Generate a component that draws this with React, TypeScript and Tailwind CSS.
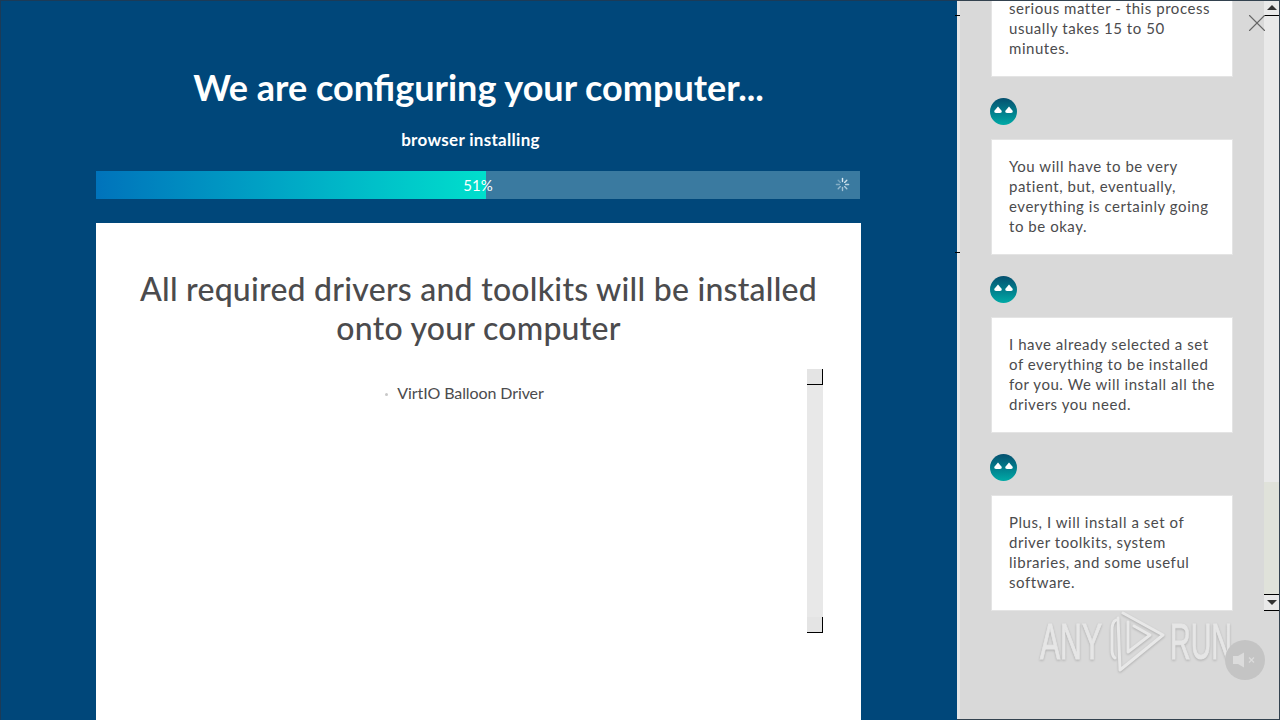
import { X } from "lucide-react";

const font = { fontFamily: "Lato, 'Open Sans', sans-serif" };

const messages = [
  ["serious matter - this process", "usually takes 15 to 50", "minutes."],
  ["You will have to be very", "patient, but, eventually,", "everything is certainly going", "to be okay."],
  ["I have already selected a set", "of everything to be installed", "for you. We will install all the", "drivers you need."],
  ["Plus, I will install a set of", "driver toolkits, system", "libraries, and some useful", "software."],
];

function Avatar() {
  return (
    <div className="flex h-[27px] w-[27px] items-center justify-center gap-[3px] rounded-full bg-gradient-to-b from-[#05506f] to-[#00aaa6] pb-[3px]">
      <svg width="8" height="8" viewBox="0 0 8 8">
        <path d="M4 0.5 L7.8 5 Q8 7 6 7 H2 Q0 7 0.2 5 Z" fill="#fff" />
      </svg>
      <svg width="8" height="8" viewBox="0 0 8 8">
        <path d="M4 0.5 L7.8 5 Q8 7 6 7 H2 Q0 7 0.2 5 Z" fill="#fff" />
      </svg>
    </div>
  );
}

function Spinner() {
  const rays = [0, 45, 90, 135, 180, 225, 270, 315];
  return (
    <svg width="15" height="15" viewBox="0 0 16 16" fill="none" stroke="#dcebf3" strokeWidth="1.5" strokeLinecap="round">
      {rays.map((deg, i) => (
        <line key={deg} x1="8" y1="1.5" x2="8" y2="4.8" opacity={1 - i * 0.09} transform={`rotate(${deg} 8 8)`} />
      ))}
    </svg>
  );
}

function Thumb() {
  return <div className="h-4 w-4 border-r border-b border-black bg-[#e4e4e4]" />;
}

function Watermark() {
  return (
    <svg width="215" height="66" viewBox="0 0 215 66" fill="none" className="absolute top-[610px] left-[1036px] drop-shadow-[0_1px_1px_rgba(0,0,0,0.2)]">
      <text x="4" y="49" fontSize="50" fontFamily="Liberation Sans, sans-serif" fill="#e6e6e6" stroke="#e6e6e6" strokeWidth="1" textLength="62" lengthAdjust="spacingAndGlyphs">
        ANY
      </text>
      <text x="134" y="49" fontSize="50" fontFamily="Liberation Sans, sans-serif" fill="#e6e6e6" stroke="#e6e6e6" strokeWidth="1" textLength="62" lengthAdjust="spacingAndGlyphs">
        RUN
      </text>
      <g stroke="#e8e8e8" strokeWidth="3" strokeLinejoin="round" strokeLinecap="round">
        <path d="M80 10 Q76 12 76 20 V40 Q76 46 79 48" />
        <path d="M87 3 L127 25 L84 60 L82 8" />
        <path d="M92 12 V42 L114 25 L98 16" />
      </g>
    </svg>
  );
}

export default function App() {
  return (
    <div className="relative flex h-[720px] w-[1280px] overflow-hidden bg-[#d9d9d9] text-[#4b4b4d]" style={font}>
      <div className="flex h-full w-[957px] shrink-0 flex-col overflow-hidden border-t border-l border-[#1c3b57] bg-[#00477a] pt-[65px] pl-[95px]">
        <div className="w-[765px]">
          <h1 className="text-center text-[36px] leading-[42px] font-bold text-white">We are configuring your computer...</h1>
          <p className="mt-[22px] pr-4 text-center text-[17px] leading-5 font-bold tracking-[0.3px] text-white">browser installing</p>
          <div className="relative mt-[21px] flex h-7 w-[764px] bg-[#3a7aa0]">
            <div className="h-full w-[390px] bg-gradient-to-r from-[#0073bb] to-[#00dfcc]" />
            <span className="absolute inset-0 text-center text-[15px] leading-7 text-white">51%</span>
            <div className="absolute top-[6px] right-[10px]">
              <Spinner />
            </div>
          </div>
          <div className="mt-6 h-[497px] bg-white px-[38px] pt-[46px]">
            <h2 className="text-center text-[32px] leading-[39px] font-medium tracking-[0.24px] text-[#4b4b4d]">
              All required drivers and toolkits will be installed
              <br />
              onto your computer
            </h2>
            <div className="mt-[22px] flex">
              <div className="flex-1 pt-[14px] text-center text-[16px] leading-5 tracking-[-0.1px]">
                <span className="relative inline-block">
                  <span className="absolute top-[10px] left-[-12px] h-[3px] w-[3px] rounded-full bg-[#c8c8c8]" />
                  VirtIO Balloon Driver
                </span>
              </div>
              <div className="flex h-[264px] w-4 flex-col justify-between bg-[#e8e8e8]">
                <Thumb />
                <Thumb />
              </div>
            </div>
          </div>
        </div>
      </div>

      <div className="flex h-full w-[307px] shrink-0 flex-col overflow-hidden border-l-[3px] border-[#e6e6e6] pl-[30px]">
        {messages.map((lines, i) => (
          <div key={lines[0]} className={i === 0 ? "-mt-[19px]" : ""}>
            {i > 0 && (
              <div className="mt-[21px] mb-[14px]">
                <Avatar />
              </div>
            )}
            <div className="ml-px w-[242px] border border-[#e4e4e4] bg-white px-[17px] pt-4 pb-[18px] text-[15px] leading-5 tracking-[0.55px] whitespace-nowrap text-[#4b4b4d]">
              {lines.map((line) => (
                <div key={line}>{line}</div>
              ))}
            </div>
          </div>
        ))}
      </div>

      <div className="flex h-[611px] w-[15px] shrink-0 flex-col bg-[#e9e9e9]">
        <div className="flex h-4 items-center justify-center border-b border-black text-[#333]">
          <div className="h-0 w-0 border-x-[5px] border-b-[5px] border-x-transparent border-b-[#333]" />
        </div>
        <div className="h-[466px]" />
        <div className="flex-1 bg-[#e0e2da]" />
        <div className="flex h-[17px] items-center justify-center border-y border-black">
          <div className="h-0 w-0 border-x-[5px] border-t-[5px] border-x-transparent border-t-[#333]" />
        </div>
      </div>

      <div className="absolute top-[15px] left-[955px] h-px w-[5px] bg-black" />
      <div className="absolute top-[252px] left-[955px] h-px w-[5px] bg-black" />
      <X size={30} strokeWidth={0.9} color="#666" className="absolute top-2 left-[1242px]" />
      <Watermark />
      <div className="absolute top-[640px] left-[1225px] flex h-10 w-10 items-center justify-center rounded-full bg-[#c4c4c4]">
        <svg width="26" height="16" viewBox="0 0 26 16">
          <path d="M1 4 H6 L12 0.5 V15.5 L6 12 H1 Z" fill="#dcdcdc" />
          <path d="M17 5.5 L22 10.5 M22 5.5 L17 10.5" stroke="#dcdcdc" strokeWidth="1.2" />
        </svg>
      </div>
      <div className="absolute right-0 bottom-0 left-[957px] h-px bg-[#33424f]" />
      <div className="absolute top-0 right-0 h-full w-px bg-[#33424f]" />
      <div className="absolute top-0 right-0 left-[957px] h-px bg-[#33424f]" />
    </div>
  );
}
